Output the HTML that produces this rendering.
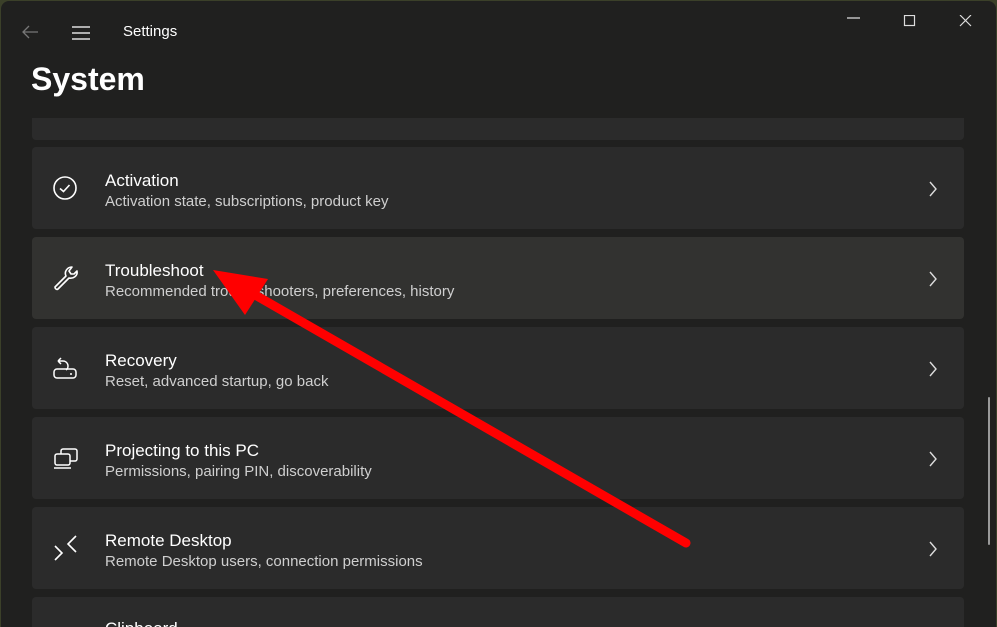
<!DOCTYPE html>
<html><head><meta charset="utf-8"><style>
*{margin:0;padding:0;box-sizing:border-box}
body{width:997px;height:627px;overflow:hidden;background:#3b4029;font-family:"Liberation Sans",sans-serif;position:relative}
.win{position:absolute;left:1px;top:1px;width:995px;height:626px;background:#20201f;border-radius:8px 8px 0 0;overflow:hidden}
.card{position:absolute;left:31px;width:932px;height:82px;background:#2b2b2b;border-radius:4px}
.t{position:absolute;left:73px;top:24px;font-size:17px;color:#fff}
.s{position:absolute;left:73px;top:46px;font-size:15px;color:#cfcfcf}
.chev{position:absolute;left:896px;top:34px}
.ic{position:absolute;left:20px;top:29px}
</style></head><body><div class="win">
<svg style="position:absolute;left:20px;top:24px" width="18" height="14"><path d="M17 7H2M8 1L2 7l6 6" stroke="#777" stroke-width="1.3" fill="none"/></svg>
<svg style="position:absolute;left:70px;top:24px" width="20" height="16"><path d="M1 2h18M1 8h18M1 14h18" stroke="#ddd" stroke-width="1.4"/></svg>
<div style="position:absolute;left:122px;top:22px;font-size:15px;color:#fff">Settings</div>
<svg style="position:absolute;left:846px;top:14px" width="130" height="16"><path d="M0 3h13" stroke="#ddd" stroke-width="1.2"/><rect x="57.5" y="0.5" width="10" height="10" stroke="#ddd" fill="none" stroke-width="1.2"/><path d="M113 0l11 11M124 0l-11 11" stroke="#ddd" stroke-width="1.2"/></svg>
<div style="position:absolute;left:30px;top:60px;font-size:32px;font-weight:bold;color:#fff">System</div>
<div style="position:absolute;left:0;top:117px;width:995px;height:510px;overflow:hidden">
<div class="card" style="top:-60px"></div>
<div class="card" style="top:29px"><svg class="ic" width="26" height="26"><circle cx="13" cy="12" r="11" stroke="#fff" stroke-width="1.6" fill="none"/><path d="M8 12.5l3.5 3 6-6.5" stroke="#fff" stroke-width="1.6" fill="none"/></svg><div class="t">Activation</div><div class="s">Activation state, subscriptions, product key</div><svg class="chev" width="10" height="16"><path d="M2 1l6 7-6 7" stroke="#ddd" stroke-width="1.4" fill="none"/></svg></div>
<div class="card" style="top:119px;background:#323230"><svg class="ic" width="28" height="28" style="top:27px"><path d="M3 23l11-11c-2-4 1-9 6-9l-3 4 2 3 3 0 3-3c1 5-4 8-8 7L6 25c-1 1-3 0-3-2z" stroke="#fff" stroke-width="1.6" fill="none" stroke-linejoin="round"/></svg><div class="t">Troubleshoot</div><div class="s">Recommended troubleshooters, preferences, history</div><svg class="chev" width="10" height="16"><path d="M2 1l6 7-6 7" stroke="#ddd" stroke-width="1.4" fill="none"/></svg></div>
<div class="card" style="top:209px"><svg class="ic" width="28" height="26"><path d="M6 5l3-3M6 5l3 3M6 5h5a5 5 0 0 1 3 9" stroke="#fff" stroke-width="1.5" fill="none"/><rect x="2" y="13" width="22" height="9" rx="3" stroke="#fff" stroke-width="1.5" fill="none"/><circle cx="19" cy="18" r="1" fill="#fff"/></svg><div class="t">Recovery</div><div class="s">Reset, advanced startup, go back</div><svg class="chev" width="10" height="16"><path d="M2 1l6 7-6 7" stroke="#ddd" stroke-width="1.4" fill="none"/></svg></div>
<div class="card" style="top:299px"><svg class="ic" width="28" height="26"><rect x="9" y="3" width="16" height="12" rx="2" stroke="#fff" stroke-width="1.5" fill="none"/><rect x="3" y="8" width="15" height="11" rx="2" stroke="#fff" stroke-width="1.5" fill="#2b2b2b"/><path d="M2 22h17" stroke="#fff" stroke-width="1.5"/></svg><div class="t">Projecting to this PC</div><div class="s">Permissions, pairing PIN, discoverability</div><svg class="chev" width="10" height="16"><path d="M2 1l6 7-6 7" stroke="#ddd" stroke-width="1.4" fill="none"/></svg></div>
<div class="card" style="top:389px"><svg class="ic" width="28" height="28" style="top:27px"><path d="M3 12l7 7-7 7M24 2l-8 8 8 8" stroke="#fff" stroke-width="1.6" fill="none"/></svg><div class="t">Remote Desktop</div><div class="s">Remote Desktop users, connection permissions</div><svg class="chev" width="10" height="16"><path d="M2 1l6 7-6 7" stroke="#ddd" stroke-width="1.4" fill="none"/></svg></div>
<div class="card" style="top:479px"><div class="t" style="top:22px">Clipboard</div></div>
</div>
<div style="position:absolute;left:987px;top:396px;width:2px;height:148px;background:#9a9a9a;border-radius:1px"></div>
</div>
<svg style="position:absolute;left:0;top:0" width="997" height="627"><path d="M686 543L250 292" stroke="#f00" stroke-width="9" stroke-linecap="round"/><path d="M213 270L268 279L245 315Z" fill="#f00"/></svg>
</body></html>
